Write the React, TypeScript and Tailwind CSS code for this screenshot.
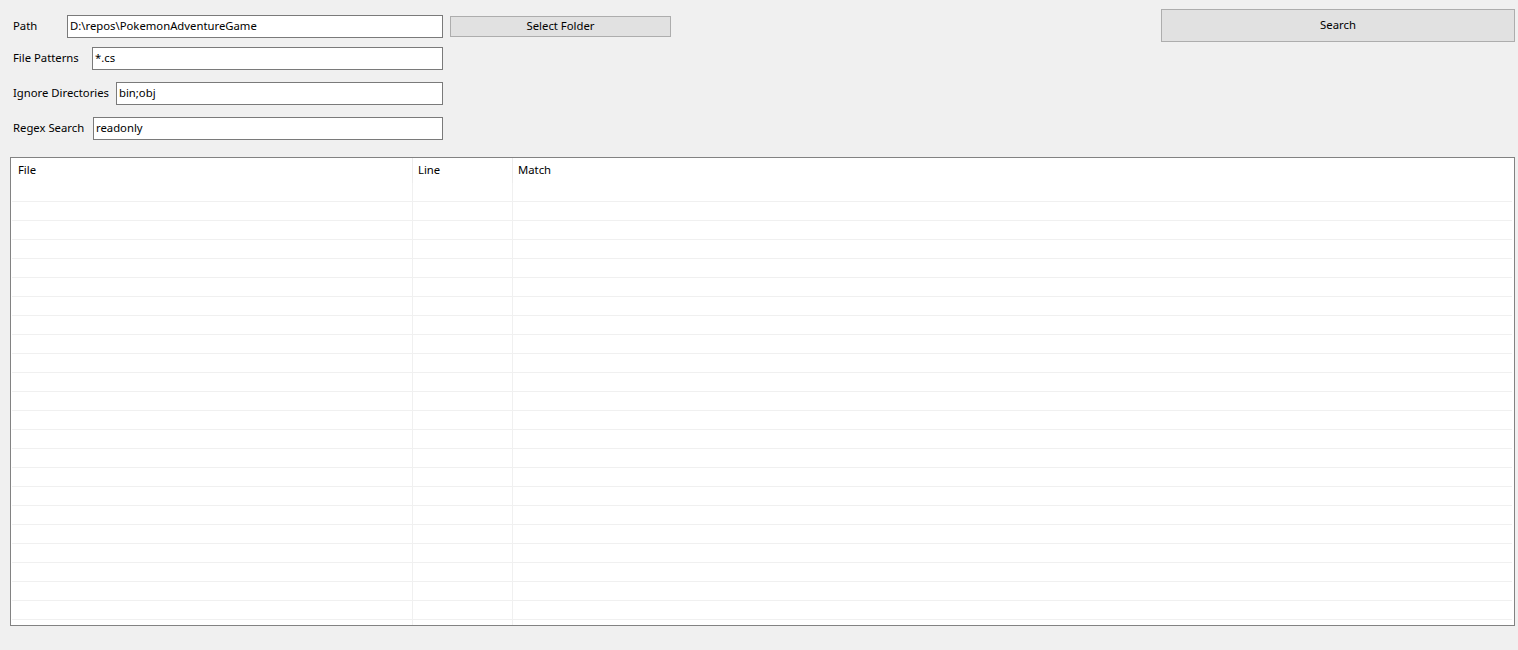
import React from 'react';

const fields = [
  { label: 'File Patterns', value: '*.cs', labelWidth: 'w-[79px]', inputWidth: 'w-[351px]', gap: 'mt-[9px]' },
  { label: 'Ignore Directories', value: 'bin;obj', labelWidth: 'w-[103px]', inputWidth: 'w-[327px]', gap: 'mt-[12px]' },
  { label: 'Regex Search', value: 'readonly', labelWidth: 'w-[80px]', inputWidth: 'w-[350px]', gap: 'mt-[12px]' },
];

const rows = Array.from({ length: 23 }, (_, i) => i);

function TextBox({ value, width }: { value: string; width: string }) {
  return (
    <div className={`${width} h-[23px] border border-[#7a7a7a] bg-white flex items-center pl-[2px] text-black whitespace-nowrap`}>
      {value}
    </div>
  );
}

export default function App() {
  return (
    <div
      className="w-[1518px] h-[650px] bg-[#f0f0f0] text-[11.3px] text-black overflow-hidden"
      style={{ fontFamily: '"Noto Sans", "Open Sans", Arial, sans-serif' }}
    >
      {/* top form */}
      <div className="flex items-start justify-between">
        <div className="pl-[13px] pt-[15px]">
          <div className="flex items-center">
            <div className="w-[54px] whitespace-nowrap">Path</div>
            <TextBox value="D:\repos\PokemonAdventureGame" width="w-[376px]" />
            <button className="ml-[7px] w-[221px] h-[21px] bg-[#e1e1e1] border border-[#adadad] text-black">
              Select Folder
            </button>
          </div>
          {fields.map((f) => (
            <div key={f.label} className={`flex items-center ${f.gap}`}>
              <div className={`${f.labelWidth} whitespace-nowrap`}>{f.label}</div>
              <TextBox value={f.value} width={f.inputWidth} />
            </div>
          ))}
        </div>
        <button className="mt-[9px] mr-[3px] w-[354px] h-[33px] bg-[#e1e1e1] border border-[#adadad] text-black">
          Search
        </button>
      </div>

      {/* results list */}
      <div className="mt-[17px] ml-[10px] mr-[3px] h-[469px] border border-[#828282] bg-white flex flex-col">
        <div className="flex h-[25px] shrink-0">
          <div className="w-[402px] border-r border-[#ececec] pl-[7px] flex items-center">File</div>
          <div className="w-[100px] border-r border-[#ececec] pl-[5px] flex items-center">Line</div>
          <div className="flex-1 pl-[5px] flex items-center">Match</div>
        </div>
        {rows.map((r) => (
          <div key={r} className="flex h-[19px] shrink-0 mx-[1px]">
            <div className="w-[401px] border-r border-b border-[#f0f0f0]" />
            <div className="w-[100px] border-r border-b border-[#f0f0f0]" />
            <div className="flex-1 border-b border-[#f0f0f0] mr-[1px]" />
          </div>
        ))}
        <div className="flex flex-1 mx-[1px]">
          <div className="w-[401px] border-r border-[#f0f0f0]" />
          <div className="w-[100px] border-r border-[#f0f0f0]" />
          <div className="flex-1" />
        </div>
      </div>
    </div>
  );
}
